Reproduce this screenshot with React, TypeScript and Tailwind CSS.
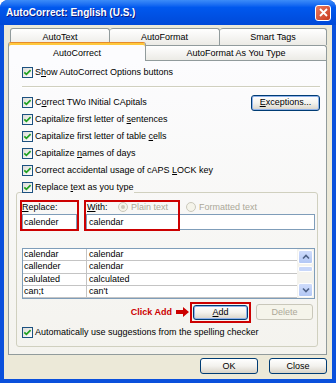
import React from "react";

const Check = () => (
  <span className="inline-flex w-[11px] h-[11px] border border-[#1c5180] bg-linear-to-br from-[#dcdcd7] to-white items-center justify-center shrink-0">
    <svg width="9" height="9" viewBox="0 0 9 9">
      <path d="M1.3 4.3 L3.4 6.4 L7.6 2.1" stroke="#21a121" strokeWidth="1.7" fill="none" />
    </svg>
  </span>
);

const CheckRow = ({ children }: { children: React.ReactNode }) => (
  <div className="h-[17px] flex items-center gap-[2px]">
    <Check />
    <span>{children}</span>
  </div>
);

const Radio = ({ on }: { on?: boolean }) => (
  <span className="inline-flex w-[10px] h-[10px] rounded-full border border-[#cac8bb] bg-[#f5f4ea] items-center justify-center shrink-0">
    {on && <span className="w-[4px] h-[4px] rounded-full bg-[#cac8bb]" />}
  </span>
);

const XpButton = ({
  children,
  className = "",
  focus,
}: {
  children: React.ReactNode;
  className?: string;
  focus?: boolean;
}) => (
  <div
    className={
      "flex items-center justify-center border border-[#003c74] rounded-[3px] bg-linear-to-b from-white via-[#f3f2ee] to-[#d8d3c8] " +
      (focus ? "shadow-[inset_0_0_0_1px_#90b2ea] " : "") +
      className
    }
  >
    {children}
  </div>
);

const Chevron = ({ up }: { up?: boolean }) => (
  <svg width="8" height="6" viewBox="0 0 8 6">
    <path d={up ? "M1 4.5 L4 1.5 L7 4.5" : "M1 1.5 L4 4.5 L7 1.5"} stroke="#4d6185" strokeWidth="1.6" fill="none" />
  </svg>
);

const rows = [
  ["calendar", "calendar"],
  ["callender", "calendar"],
  ["calulated", "calculated"],
  ["can;t", "can't"],
];

export default function App() {
  return (
    <div className="w-[336px] h-[383px] flex flex-col rounded-t-[8px] overflow-hidden bg-[#0a50dc] font-['Liberation_Sans',Arial,sans-serif] text-[9px] text-black leading-none">
      {/* title bar */}
      <div className="h-[25px] shrink-0 flex items-center justify-between pl-[6px] pr-[5px] bg-linear-to-b from-[#3c8cf8] via-[#0058ee] via-30% to-[#0049d8]">
        <span className="text-white font-bold text-[10px] [text-shadow:1px_1px_0_#0a1883]">
          AutoCorrect: English (U.S.)
        </span>
        <div className="w-[16px] h-[16px] rounded-[3px] border border-white bg-linear-to-br from-[#e9795e] to-[#c8381a] flex items-center justify-center">
          <svg width="9" height="9" viewBox="0 0 9 9">
            <path d="M1 1L8 8M8 1L1 8" stroke="white" strokeWidth="1.8" />
          </svg>
        </div>
      </div>

      {/* body */}
      <div className="flex-1 mx-[4px] mb-[4px] bg-[#ece9d8] pt-[3px] pl-[4px] pr-[5px] flex flex-col">
        {/* tab row 1 */}
        <div className="h-[17px] shrink-0 flex pl-[2px]">
          <div className="w-[100px] border border-b-0 border-[#919b9c] rounded-t-[3px] bg-linear-to-b from-white to-[#ecebe6] flex justify-center pt-[4px]">
            AutoText
          </div>
          <div className="w-[110px] border border-l-0 border-b-0 border-[#919b9c] rounded-t-[3px] bg-linear-to-b from-white to-[#ecebe6] flex justify-center pt-[4px]">
            AutoFormat
          </div>
          <div className="flex-1 border border-l-0 border-b-0 border-[#919b9c] rounded-t-[3px] bg-linear-to-b from-white to-[#ecebe6] flex justify-center pt-[4px]">
            Smart Tags
          </div>
        </div>
        {/* tab row 2 */}
        <div className="h-[15px] shrink-0 flex items-start">
          <div className="relative z-10 w-[138px] h-[19px] -mt-[3px] border-x border-[#919b9c] border-t border-t-[#e68b2c] rounded-t-[3px] shadow-[inset_0_2px_0_#ffc83c] bg-[#fcfcfe] flex justify-center pt-[6px]">
            AutoCorrect
          </div>
          <div className="flex-1 h-[15px] border-t border-r border-[#919b9c] rounded-tr-[3px] bg-linear-to-b from-white to-[#ecebe6] flex items-center justify-center">
            AutoFormat As You Type
          </div>
        </div>

        {/* panel */}
        <div className="h-[295px] shrink-0 border border-[#919b9c] bg-linear-to-b from-[#fcfcfe] to-[#f4f3ee] flex flex-col">
          <div className="pl-[13px] pr-[6px] pt-[3px]">
            <CheckRow>
              S<u>h</u>ow AutoCorrect Options buttons
            </CheckRow>
          </div>
          <div className="mt-[5px] ml-[13px] mr-[6px] h-[2px] border-t border-[#d0d0bf] border-b border-b-white" />

          <div className="mt-[6px] pl-[13px] pr-[6px] flex flex-col">
            <div className="flex items-center justify-between">
              <CheckRow>
                C<u>o</u>rrect TWo INitial CApitals
              </CheckRow>
              <XpButton focus className="w-[69px] h-[16px]">
                <span>
                  <u>E</u>xceptions...
                </span>
              </XpButton>
            </div>
            <CheckRow>
              Capitalize first letter of <u>s</u>entences
            </CheckRow>
            <CheckRow>
              Capitalize first letter of table <u>c</u>ells
            </CheckRow>
            <CheckRow>
              Capitalize <u>n</u>ames of days
            </CheckRow>
            <CheckRow>
              Correct accidental usage of cAPS <u>L</u>OCK key
            </CheckRow>
          </div>

          <fieldset className="ml-[7px] mr-[8px] border border-[#d0d0bf] rounded-[3px] pl-[5px] pr-[2px] pb-[5px]">
            <legend className="h-[26px] px-0">
              <CheckRow>
                Replace <u>t</u>ext as you type
              </CheckRow>
            </legend>

            <div className="relative -mt-[5px] flex gap-[9px]">
              <div className="w-[55px] flex flex-col">
                <div className="h-[14px] flex items-center">
                  <span>
                    <u>R</u>eplace:
                  </span>
                </div>
                <div className="h-[16px] border border-[#7f9db9] bg-white flex items-center px-[1px]">calender</div>
              </div>
              <div className="flex-1 flex flex-col">
                <div className="h-[14px] flex items-center">
                  <span className="w-[32px] pl-[1px]">
                    <u>W</u>ith:
                  </span>
                  <div className="w-[68px] flex items-center gap-[3px] text-[#aca899]">
                    <Radio on />
                    <span>Plain text</span>
                  </div>
                  <div className="flex items-center gap-[3px] text-[#aca899]">
                    <Radio />
                    <span>Formatted text</span>
                  </div>
                </div>
                <div className="h-[16px] border border-[#7f9db9] bg-white flex items-center px-[2px]">calendar</div>
              </div>
              {/* red annotation boxes */}
              <div className="absolute left-[-2px] top-0 w-[59px] h-[31px] border-2 border-[#cc0000]" />
              <div className="absolute left-[62px] top-0 w-[96px] h-[31px] border-2 border-[#cc0000]" />
            </div>

            {/* list */}
            <div className="mt-[18px] h-[51px] border border-[#7f9db9] bg-white flex">
              <div className="flex-1 flex flex-col">
                {rows.map(([a, b]) => (
                  <div key={a} className="h-[12.25px] border-b border-[#c4c4c4] flex items-center">
                    <div className="w-[64px] h-full border-r border-[#c4c4c4] pl-[1px] flex items-center">{a}</div>
                    <div className="pl-[2px]">{b}</div>
                  </div>
                ))}
              </div>
              <div className="w-[17px] bg-[#f4f3ee] flex flex-col items-center justify-between py-[1px]">
                <div className="flex flex-col items-center gap-[2px]">
                  <div className="w-[15px] h-[14px] rounded-[2px] border border-white bg-linear-to-b from-[#cfdcfb] to-[#b3c8f5] flex items-center justify-center">
                    <Chevron up />
                  </div>
                  <div className="w-[15px] h-[6px] rounded-[2px] border border-white bg-[#c8d7fa]" />
                </div>
                <div className="w-[15px] h-[14px] rounded-[2px] border border-white bg-linear-to-b from-[#cfdcfb] to-[#b3c8f5] flex items-center justify-center">
                  <Chevron />
                </div>
              </div>
            </div>

            {/* add / delete */}
            <div className="mt-[5px] h-[16px] flex items-center justify-end pr-[2px]">
              <span className="font-bold text-[#cc0000]">Click Add</span>
              <svg className="ml-[4px]" width="13" height="10" viewBox="0 0 13 10">
                <path d="M0 3 H7 V0 L13 5 L7 10 V7 H0 Z" fill="#cc0000" />
              </svg>
              <div className="ml-[1px] border-2 border-[#cc0000] p-[1px]">
                <XpButton focus className="w-[55px] h-[15px]">
                  <u>A</u>dd
                </XpButton>
              </div>
              <div className="ml-[5px] w-[57px] h-[16px] border border-[#c9c7ba] rounded-[3px] bg-[#f5f4ea] text-[#aca899] flex items-center justify-center">
                Delete
              </div>
            </div>

            <div className="mt-[4px]">
              <CheckRow>Automatically use suggestions from the spelling checker</CheckRow>
            </div>
          </fieldset>
        </div>

        {/* OK / Close */}
        <div className="mt-[3px] flex justify-end gap-[11px]">
          <XpButton className="w-[58px] h-[16px]">OK</XpButton>
          <XpButton className="w-[58px] h-[16px]">Close</XpButton>
        </div>
      </div>
    </div>
  );
}
